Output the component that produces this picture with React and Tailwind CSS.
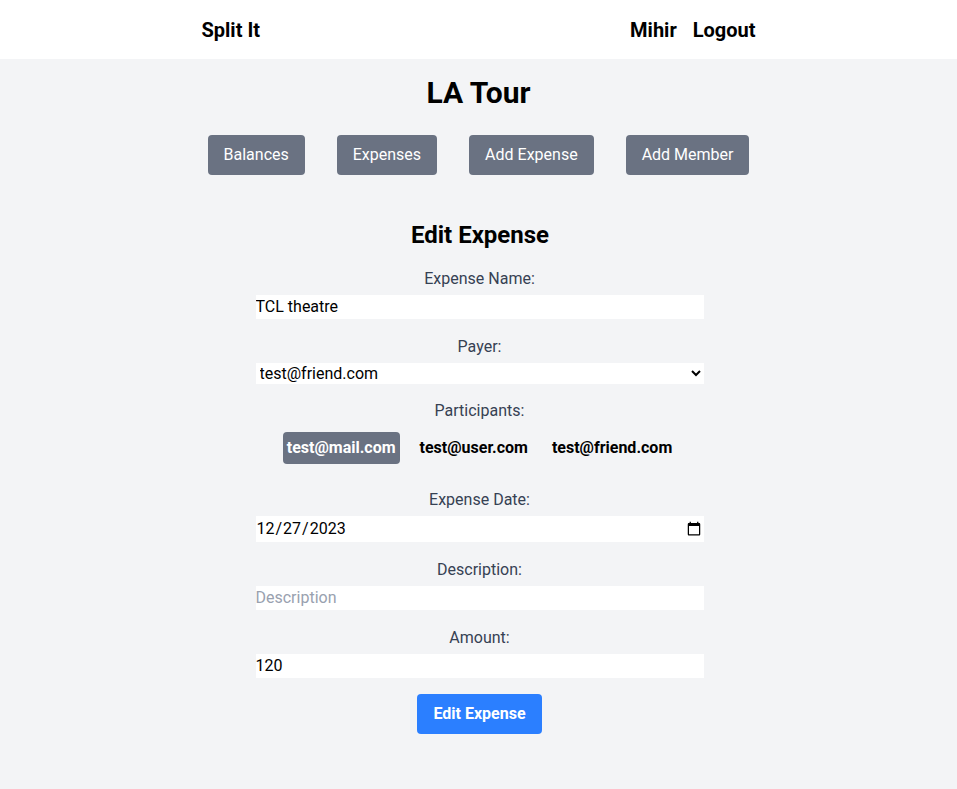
import { useState } from "react";

const members = ["test@mail.com", "test@user.com", "test@friend.com"];

export default function App() {
  const [selected, setSelected] = useState(["test@mail.com"]);

  const toggle = (m) => {
    setSelected((s) => (s.includes(m) ? s.filter((x) => x !== m) : [...s, m]));
  };

  return (
    <div className="min-h-screen bg-gray-100 font-['Roboto',sans-serif] text-black">
      {/* navbar */}
      <nav className="bg-white h-[59px]">
        <div className="w-[554px] mx-auto h-full flex items-center justify-between text-xl font-bold">
          <span>Split It</span>
          <div className="flex gap-4">
            <span>Mihir</span>
            <span>Logout</span>
          </div>
        </div>
      </nav>

      <div className="flex flex-col items-center pt-4">
        <h1 className="text-3xl font-bold">LA Tour</h1>

        <div className="flex gap-8 mt-6">
          {["Balances", "Expenses", "Add Expense", "Add Member"].map((b) => (
            <button key={b} className="bg-gray-500 text-white px-4 py-2 rounded">
              {b}
            </button>
          ))}
        </div>

        <h2 className="text-2xl font-bold mt-11 mb-4 ml-[3px]">Edit Expense</h2>

        <form className="w-[448px] ml-[2px] flex flex-col items-center" onSubmit={(e) => e.preventDefault()}>
          <Label>Expense Name:</Label>
          <input className="w-full bg-white h-6 mb-4" defaultValue="TCL theatre" />

          <Label>Payer:</Label>
          <select className="w-full bg-white h-[21px] mb-[15px]" defaultValue="test@friend.com">
            {members.map((m) => (
              <option key={m}>{m}</option>
            ))}
          </select>

          <Label>Participants:</Label>
          <div className="flex gap-4 mt-[5px] mb-6">
            {members.map((m) => (
              <button
                type="button"
                key={m}
                onClick={() => toggle(m)}
                className={`px-1 py-1 rounded font-bold ${
                  selected.includes(m) ? "bg-gray-500 text-white" : ""
                }`}
              >
                {m}
              </button>
            ))}
          </div>

          <Label>Expense Date:</Label>
          <input type="date" className="w-full bg-white h-[26px] mb-4" defaultValue="2023-12-27" />

          <Label>Description:</Label>
          <input className="w-full bg-white h-6 mb-4 placeholder:text-gray-400" placeholder="Description" />

          <Label>Amount:</Label>
          <input className="w-full bg-white h-6 mb-4" defaultValue="120" />

          <button type="submit" className="bg-blue-500 text-white font-bold px-4 py-2 rounded">
            Edit Expense
          </button>
        </form>
      </div>
    </div>
  );
}

function Label({ children }) {
  return <label className="text-gray-700 mb-1">{children}</label>;
}
